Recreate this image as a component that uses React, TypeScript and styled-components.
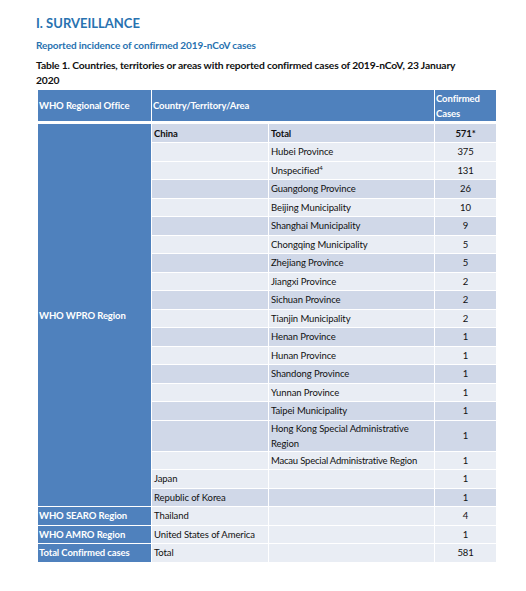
import React from "react";
import styled, { createGlobalStyle } from "styled-components";

const Global = createGlobalStyle`
  html, body { margin: 0; padding: 0; background: #ffffff; }
  body { font-family: Lato, "Open Sans", sans-serif; color: #111; }
  * { box-sizing: border-box; }
`;

const Page = styled.div`
  padding: 14px 20px 0 36px;
  width: 526px;
`;

const Title = styled.h1`
  margin: 0;
  font-size: 13px;
  font-weight: 700;
  color: #2872b0;
  line-height: 18px;
`;

const SubTitle = styled.h2`
  margin: 6px 0 0;
  font-size: 10px;
  font-weight: 700;
  color: #2872b0;
  line-height: 14px;
  letter-spacing: -0.1px;
`;

const Caption = styled.p`
  margin: 6px 0 0;
  font-size: 10.3px;
  font-weight: 700;
  color: #111;
  line-height: 15px;
  width: 428px;
  letter-spacing: -0.15px;
`;

const Table = styled.table`
  margin: 1px 0 0 1px;
  width: 459px;
  border-collapse: collapse;
  table-layout: fixed;
  font-size: 9.5px;
  letter-spacing: -0.1px;
`;

const HeadCell = styled.th`
  background: #4f81bd;
  color: #fff;
  font-weight: 700;
  text-align: left;
  padding: 0 1px;
  height: 33px;
  line-height: 15px;
  border: 1px solid #fff;
  border-bottom: 3px solid #fff;
  vertical-align: middle;
`;

const RegionCell = styled.td`
  background: #4f81bd;
  color: #fff;
  font-weight: 700;
  padding: 0 1px;
  border: 1px solid #fff;
  vertical-align: middle;
`;

const Cell = styled.td<{ $dark?: boolean; $bold?: boolean; $num?: boolean; $tall?: boolean }>`
  background: ${(p) => (p.$dark ? "#d0d8e8" : "#e9edf4")};
  font-weight: ${(p) => (p.$bold ? 700 : 400)};
  text-align: ${(p) => (p.$num ? "center" : "left")};
  padding: 0 2px;
  height: ${(p) => (p.$tall ? "20px" : "18.5px")};
  line-height: 15px;
  border: 1px solid #fff;
  vertical-align: middle;
  color: #111;
`;

type Row = { country?: string; area?: string; n: string; dark: boolean; bold?: boolean; tall?: boolean };

const wpro: Row[] = [
  { country: "China", area: "Total", n: "571*", dark: true, bold: true, tall: true },
  { area: "Hubei Province", n: "375", dark: false },
  { area: "Unspecified", n: "131", dark: false },
  { area: "Guangdong Province", n: "26", dark: true },
  { area: "Beijing Municipality", n: "10", dark: false },
  { area: "Shanghai Municipality", n: "9", dark: true },
  { area: "Chongqing Municipality", n: "5", dark: false },
  { area: "Zhejiang Province", n: "5", dark: true },
  { area: "Jiangxi Province", n: "2", dark: false },
  { area: "Sichuan Province", n: "2", dark: true },
  { area: "Tianjin Municipality", n: "2", dark: false },
  { area: "Henan Province", n: "1", dark: true },
  { area: "Hunan Province", n: "1", dark: false },
  { area: "Shandong Province", n: "1", dark: true },
  { area: "Yunnan Province", n: "1", dark: false },
  { area: "Taipei Municipality", n: "1", dark: true },
  { area: "Hong Kong Special Administrative Region", n: "1", dark: true },
  { area: "Macau Special Administrative Region", n: "1", dark: false },
  { country: "Japan", n: "1", dark: false },
  { country: "Republic of Korea", n: "1", dark: true },
];

const Sup = styled.sup`
  font-size: 6px;
  vertical-align: 4px;
  line-height: 0;
`;

const Nowrap = styled.span`
  white-space: nowrap;
  letter-spacing: -0.2px;
`;

export default function App() {
  return (
    <Page>
      <Global />
      <Title>I. SURVEILLANCE</Title>
      <SubTitle>Reported incidence of confirmed 2019-nCoV cases</SubTitle>
      <Caption>
        Table 1. Countries, territories or areas with reported confirmed cases of 2019-nCoV, 23 January 2020
      </Caption>
      <Table>
        <colgroup>
          <col style={{ width: 114 }} />
          <col style={{ width: 117 }} />
          <col style={{ width: 166 }} />
          <col style={{ width: 62 }} />
        </colgroup>
        <thead>
          <tr>
            <HeadCell>WHO Regional Office</HeadCell>
            <HeadCell colSpan={2}>Country/Territory/Area</HeadCell>
            <HeadCell>
              Confirmed
              <br />
              Cases
            </HeadCell>
          </tr>
        </thead>
        <tbody>
          {wpro.map((r, i) => (
            <tr key={i}>
              {i === 0 && <RegionCell rowSpan={wpro.length}>WHO WPRO Region</RegionCell>}
              <Cell $dark={r.dark} $bold={r.bold} $tall={r.tall}>{r.country ?? ""}</Cell>
              <Cell $dark={r.dark} $bold={r.bold} $tall={r.tall}>
                {r.area === "Unspecified" ? (
                  <>
                    Unspecified<Sup>4</Sup>
                  </>
                ) : r.area?.startsWith("Macau") ? (
                  <Nowrap>{r.area}</Nowrap>
                ) : (
                  r.area ?? ""
                )}
              </Cell>
              <Cell $dark={r.dark} $bold={r.bold} $tall={r.tall} $num>{r.n}</Cell>
            </tr>
          ))}
          <tr>
            <RegionCell>WHO SEARO Region</RegionCell>
            <Cell>Thailand</Cell>
            <Cell />
            <Cell $num>4</Cell>
          </tr>
          <tr>
            <RegionCell>WHO AMRO Region</RegionCell>
            <Cell>United States of America</Cell>
            <Cell />
            <Cell $num>1</Cell>
          </tr>
          <tr>
            <RegionCell>Total Confirmed cases</RegionCell>
            <Cell>Total</Cell>
            <Cell />
            <Cell $num>581</Cell>
          </tr>
        </tbody>
      </Table>
    </Page>
  );
}
